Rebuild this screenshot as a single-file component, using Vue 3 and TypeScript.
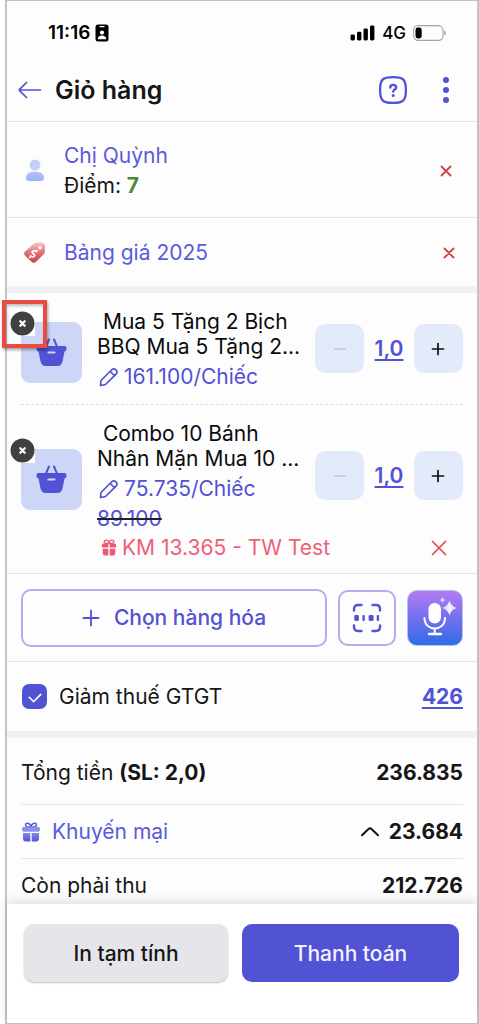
<script setup lang="ts">
import { ref } from 'vue'

interface CartItem {
  id: number
  lines: string[]
  price: string
  oldPrice?: string
  promo?: string
  qty: number
  highlighted?: boolean
}

const items = ref<CartItem[]>([
  {
    id: 1,
    lines: ['\u00a0Mua 5 Tặng 2 Bịch', 'BBQ Mua 5 Tặng 2...'],
    price: '161.100/Chiếc',
    qty: 1,
    highlighted: true,
  },
  {
    id: 2,
    lines: ['\u00a0Combo 10 Bánh', 'Nhân Mặn Mua 10 ...'],
    price: '75.735/Chiếc',
    oldPrice: '89.100',
    promo: 'KM 13.365 - TW Test',
    qty: 1,
  },
])

const reduceTax = ref(true)

function formatQty(n: number): string {
  return n.toFixed(1).replace('.', ',')
}

function removeItem(id: number): void {
  items.value = items.value.filter((i) => i.id !== id)
}
</script>

<template>
  <div class="page">
    <div class="screen">
      <div class="status">
        <span class="clock">11:16</span>
        <svg class="badge-icon" width="14" height="18" viewBox="0 0 14 18" aria-hidden="true">
          <rect x="0.5" y="0.5" width="13" height="17" rx="2.5" fill="#000" />
          <rect x="4.5" y="2" width="5" height="1.3" rx="0.6" fill="#fff" />
          <circle cx="7" cy="8.6" r="2.1" fill="#fff" />
          <path d="M2.8 15.2c0-2.6 1.8-3.8 4.2-3.8s4.2 1.2 4.2 3.8z" fill="#fff" />
        </svg>
        <span class="spacer"></span>
        <svg width="25" height="16" viewBox="0 0 25 16" aria-hidden="true">
          <rect x="0.5" y="9.5" width="4.4" height="6" rx="1.4" />
          <rect x="7" y="6.8" width="4.4" height="8.7" rx="1.4" />
          <rect x="13.5" y="3.6" width="4.4" height="11.9" rx="1.4" />
          <rect x="20" y="0.4" width="4.4" height="15.1" rx="1.4" />
        </svg>
        <span class="net">4G</span>
        <svg width="34" height="16" viewBox="0 0 34 16" aria-hidden="true">
          <rect x="0.6" y="0.6" width="29.4" height="14.8" rx="4.6" fill="none" stroke="#a3a3a3" stroke-width="1.1" />
          <rect x="2.5" y="2.6" width="6.2" height="10.8" rx="2.4" />
          <path d="M31.4 5.6c1.7.5 1.7 4.3 0 4.8z" fill="#8e8e8e" />
        </svg>
      </div>

      <header class="header">
        <button class="icon-btn" aria-label="Quay lại">
          <svg width="24" height="18" viewBox="0 0 24 18" fill="none" stroke="#5152d4" stroke-width="1.7" stroke-linecap="round" stroke-linejoin="round">
            <path d="M22.5 9H1.5M8.5 1.5L1.8 8.2Q1 9 1.8 9.8L8.5 16.5" />
          </svg>
        </button>
        <h1>Giỏ hàng</h1>
        <button class="icon-btn" aria-label="Trợ giúp">
          <svg width="30" height="30" viewBox="0 0 30 30" fill="none" stroke="#5152d4" stroke-linecap="round">
            <path d="M15 2.1C25.5 2.1 27.9 4.5 27.9 15S25.5 27.9 15 27.9 2.1 25.5 2.1 15 4.500 2.1 15 2.1Z" stroke-width="2.3" />
            <path d="M12.200 12.600c0-3.600 6-3.600 6-.1 0 2.200-3 2-3 4.100" stroke-width="2.400" />
            <circle cx="15.200" cy="20.600" r="1.500" fill="#5152d4" stroke="none" />
          </svg>
        </button>
        <button class="icon-btn more" aria-label="Thêm">
          <svg width="8" height="28" viewBox="0 0 8 28" fill="#5152d4">
            <circle cx="4" cy="4" r="3" /><circle cx="4" cy="14" r="3" /><circle cx="4" cy="24" r="3" />
          </svg>
        </button>
      </header>

      <main class="content">
        <section class="row customer">
          <svg class="lead" width="28" height="28" viewBox="0 0 28 28" aria-hidden="true">
            <defs>
              <linearGradient id="person" x1="0" y1="0" x2="0" y2="1">
                <stop offset="0" stop-color="#b3c1f6" /><stop offset="1" stop-color="#9db3f5" />
              </linearGradient>
            </defs>
            <circle cx="14" cy="8" r="5.500" fill="#c5cff7" />
            <path d="M5 20.500C5 16.500 9 14.800 14 14.800S23 16.500 23 20.500C23 23 22 24 20 24H8C6 24 5 23 5 20.500Z" fill="url(#person)" />
          </svg>
          <div class="grow">
            <a class="link" href="#">Chị Quỳnh</a>
            <div>Điểm: <b class="points">7</b></div>
          </div>
          <button class="icon-btn x-customer" aria-label="Bỏ khách hàng">
            <svg width="12" height="12" viewBox="0 0 12 12" stroke="#d43f3f" stroke-width="1.800" stroke-linecap="round"><path d="M1.500 1.500l9 9M10.500 1.500l-9 9" /></svg>
          </button>
        </section>

        <section class="row pricebook">
          <svg class="lead" width="28" height="28" viewBox="0 0 28 28" aria-hidden="true">
            <defs>
              <linearGradient id="tag" x1="0" y1="0" x2="0" y2="1">
                <stop offset="0" stop-color="#f9c6c9" /><stop offset="0.5" stop-color="#df7476" /><stop offset="1" stop-color="#cd3c3c" />
              </linearGradient>
            </defs>
            <path d="M12.500 5Q14 3.700 16 3.600L20.500 3.500Q24 3.500 24 7V12Q24 14 22.700 15.200L15 22.700Q12.800 24.600 10.600 22.700L4.300 17Q2 14.500 4.200 12.300Z" fill="url(#tag)" />
            <circle cx="19" cy="8.700" r="1.700" fill="#fff" />
            <path d="M15.500 12.600C13 11 10.200 12.200 11.400 14.100C12.400 15.400 14.200 15.200 13.500 17C12.700 18.400 10.600 18 9.400 17M16 11.600l-.8 1M9.700 17.200l-.9 1.200" fill="none" stroke="#fff" stroke-width="1.700" stroke-linecap="round" />
          </svg>
          <a class="link grow" href="#">Bảng giá 2025</a>
          <button class="icon-btn x-price" aria-label="Bỏ bảng giá">
            <svg width="12" height="12" viewBox="0 0 12 12" stroke="#d43f3f" stroke-width="1.800" stroke-linecap="round"><path d="M1.500 1.500l9 9M10.500 1.500l-9 9" /></svg>
          </button>
        </section>

        <div class="band"></div>

        <ul class="items">
          <li v-for="item in items" :key="item.id" class="item">
            <div class="thumb">
              <svg width="31" height="29" viewBox="0 0 31 29" aria-hidden="true">
                <path d="M10 8.500L13 1.500M21 8.500L18 1.500" stroke="#5152d4" stroke-width="2" stroke-linecap="round" />
                <path d="M2.500 8H28.500Q30.500 8 30.500 10V11Q30.500 13 28.500 13.500L26.600 23Q25.500 28 21.500 28H9.500Q5.500 28 4.400 23L2.500 13.500Q.5 13 .5 11V10Q.5 8 2.500 8Z" fill="#5152d4" />
                <path d="M12.500 14.500H18.500" stroke="#cfd6f7" stroke-width="2.200" stroke-linecap="round" />
              </svg>
              <button class="remove" aria-label="Xóa hàng hóa" @click="removeItem(item.id)">
                <svg width="25" height="25" viewBox="0 0 25 25">
                  <circle cx="12.500" cy="12.500" r="12" fill="#404040" />
                  <path d="M10.300 10.300l4.400 4.400M14.700 10.300l-4.400 4.400" stroke="#fff" stroke-width="2.300" stroke-linecap="round" />
                </svg>
              </button>
              <span v-if="item.highlighted" class="marker"></span>
            </div>

            <div class="info">
              <div v-for="line in item.lines" :key="line" class="name">{{ line }}</div>
              <button class="price">
                <svg width="20" height="20" viewBox="0 0 20 20" fill="none" stroke="#5152d4" stroke-width="1.700" stroke-linejoin="round" aria-hidden="true">
                  <path d="M1.500 18.500L2 13.500L13 2.500Q15 .9 16.900 2.800Q18.800 4.700 17.300 6.800L6.500 17.500L1.500 18.500ZM11.300 4.500l4 4" />
                </svg>
                {{ item.price }}
              </button>
              <div v-if="item.oldPrice"><s class="old"><span>{{ item.oldPrice }}</span></s></div>
            </div>

            <div class="stepper">
              <button class="step" disabled aria-label="Giảm">
                <svg width="14" height="14" viewBox="0 0 14 14" stroke="#c3c7d2" stroke-width="1.500"><path d="M1 7h12" /></svg>
              </button>
              <button class="qty">{{ formatQty(item.qty) }}</button>
              <button class="step" aria-label="Tăng">
                <svg width="14" height="14" viewBox="0 0 14 14" stroke="#111" stroke-width="1.700" stroke-linecap="round"><path d="M1.500 7h11M7 1.500v11" /></svg>
              </button>
            </div>

            <div v-if="item.promo" class="promo">
              <svg width="16" height="17" viewBox="0 0 16 17" fill="#ef5a72" aria-hidden="true">
                <path d="M7.500 4.500C5 4.500 3 4 3.200 2.300 3.500.6 7 .5 8 3.500 9 .5 12.500.6 12.800 2.300 13 4 11 4.500 8.500 4.500Z" fill="none" stroke="#ef5a72" stroke-width="1.400" />
                <path d="M2 4.500H7.300V8.500H1.500Q.8 8.500.8 7.500V6Q.8 4.500 2 4.500ZM8.700 4.500H14Q15.200 4.500 15.200 6V7.500Q15.200 8.500 14.500 8.500H8.700ZM1.700 9.800H7.300V16.500H4Q1.700 16.500 1.700 14ZM8.700 9.800H14.300V14Q14.300 16.500 12 16.500H8.700Z" />
              </svg>
              <span class="grow">{{ item.promo }}</span>
              <button class="icon-btn" aria-label="Bỏ khuyến mại">
                <svg width="16" height="16" viewBox="0 0 16 16" stroke="#e5484d" stroke-width="1.700" stroke-linecap="round"><path d="M1.500 1.500l13 13M14.500 1.500l-13 13" /></svg>
              </button>
            </div>
          </li>
        </ul>

        <section class="actions">
          <button class="choose">
            <svg width="18" height="18" viewBox="0 0 18 18" stroke="#5152d4" stroke-width="1.800" stroke-linecap="round" aria-hidden="true"><path d="M1.500 9h15M9 1.500v15" /></svg>
            Chọn hàng hóa
          </button>
          <button class="scan" aria-label="Quét mã">
            <svg width="30" height="30" viewBox="0 0 30 30" fill="none" stroke="#5152d4" stroke-width="2.400" stroke-linecap="round">
              <path d="M2 7.500V6Q2 2 6 2H9.500M20.500 2H24Q28 2 28 6V7.500M28 22.500V24Q28 28 24 28H20.500M9.500 28H6Q2 28 2 24V22.500" />
              <g fill="#5152d4" stroke="none">
                <rect x="2.300" y="12" width="4.600" height="6" rx="1.400" />
                <rect x="10.400" y="12" width="2.400" height="6" rx="1" />
                <rect x="16.600" y="12" width="5" height="6" rx="1.400" />
                <rect x="24.700" y="12" width="2.400" height="6" rx="1" />
              </g>
            </svg>
          </button>
          <button class="voice" aria-label="Giọng nói">
            <svg width="54" height="54" viewBox="0 0 54 54" fill="none" aria-hidden="true">
              <defs>
                <linearGradient id="spark" x1="0" y1="0" x2="1" y2="0">
                  <stop offset="0" stop-color="#a9eafa" /><stop offset="0.5" stop-color="#f2f0ff" /><stop offset="1" stop-color="#f6c9ee" />
                </linearGradient>
              </defs>
              <rect x="20.500" y="12" width="12.500" height="20.500" rx="6.200" fill="#fff" />
              <path d="M16.500 27C16.500 41 37 41 37 27M26.700 37.500V43" stroke="#fff" stroke-width="2" stroke-linecap="round" />
              <path d="M21 43H33" stroke="#fff" stroke-width="2.400" stroke-linecap="round" />
              <path d="M41.500 9.500Q43 15.500 49 17Q43 18.500 41.500 24.500Q40 18.500 34 17Q40 15.500 41.500 9.500Z" fill="url(#spark)" />
              <path d="M34.500 6Q35 8.500 37.500 9Q35 9.500 34.500 12Q34 9.500 31.500 9Q34 8.500 34.500 6Z" fill="#e2d5fc" />
            </svg>
          </button>
        </section>

        <section class="tax">
          <label class="tax-label">
            <input v-model="reduceTax" type="checkbox" />
            Giảm thuế GTGT
          </label>
          <button class="tax-value">426</button>
        </section>

        <div class="band"></div>

        <dl class="totals">
          <div class="line first">
            <dt>Tổng tiền <b>(SL: 2,0)</b></dt>
            <dd>236.835</dd>
          </div>
          <div class="line">
            <dt class="discount">
              <svg width="20" height="20" viewBox="0 0 20 20" aria-hidden="true">
                <defs>
                  <linearGradient id="gift" x1="0" y1="0" x2="0" y2="1">
                    <stop offset="0" stop-color="#8587e8" /><stop offset="1" stop-color="#5254d4" />
                  </linearGradient>
                </defs>
                <path d="M9.500 5C6 5 4.200 4 4.600 2.300 5 .5 9 .8 10 4.500 11 .8 15 .5 15.400 2.300 15.800 4 14 5 10.500 5Z" fill="none" stroke="#5658d6" stroke-width="1.500" />
                <rect x="1" y="4.800" width="18" height="5" rx="2" fill="#8d8fea" />
                <path d="M2 11H9.300V19.500H5Q2 19.500 2 16.500ZM10.700 11H18V16.500Q18 19.500 15 19.500H10.700Z" fill="url(#gift)" />
              </svg>
              Khuyến mại
            </dt>
            <dd>
              <svg width="20" height="11" viewBox="0 0 20 11" fill="none" stroke="#111" stroke-width="2" stroke-linecap="round" stroke-linejoin="round" aria-hidden="true"><path d="M2 9.200L8.800 2.800Q10 1.700 11.200 2.800L18 9.200" /></svg>
              23.684
            </dd>
          </div>
          <div class="line">
            <dt>Còn phải thu</dt>
            <dd>212.726</dd>
          </div>
        </dl>
      </main>

      <footer class="footer">
        <button class="btn secondary">In tạm tính</button>
        <button class="btn primary">Thanh toán</button>
      </footer>
    </div>
  </div>
</template>

<style>
html,
body {
  background: #fff;
}
</style>

<style scoped>
* {
  box-sizing: border-box;
}
.page {
  padding-left: 5px;
  height: 100vh;
  font-family: Inter, 'Liberation Sans', sans-serif;
  font-size: 21px;
  line-height: 30px;
  color: #161616;
}
.screen {
  display: flex;
  flex-direction: column;
  height: 100%;
  background: #fdfdfe;
  border: 1px solid #c4c4c6;
  border-width: 1px 2px 1px 2px;
}
button {
  font: inherit;
  color: inherit;
  background: none;
  border: 0;
  padding: 0;
  cursor: pointer;
  display: flex;
  align-items: center;
  justify-content: center;
  white-space: nowrap;
}
svg {
  display: block;
  flex: none;
}
.grow {
  flex: 1;
}
.spacer {
  flex: 1;
}
.status {
  display: flex;
  align-items: center;
  height: 64px;
  padding: 0 30px 0 41px;
  color: #000;
}
.clock {
  font-weight: 600;
  font-size: 19px;
  margin-right: 5px;
}
.net {
  font-size: 17px;
  font-weight: 500;
  margin: 0 7px;
}
.header {
  display: flex;
  align-items: center;
  height: 57px;
  padding: 0 27px 6px 11px;
  border-bottom: 1px solid #e4e4e7;
}
h1 {
  flex: 1;
  margin: 0 0 0 13px;
  font-size: 25px;
  font-weight: 600;
}
.more {
  margin-left: 34px;
}
.content {
  flex: 1;
  min-height: 0;
  overflow-y: auto;
  scrollbar-width: none;
  margin-left: -7px;
  padding-left: 7px;
}
.row {
  display: flex;
  align-items: center;
  padding: 2px 14px 0 14px;
  border-bottom: 1px solid #e4e4e7;
}
.customer {
  height: 96px;
}
.pricebook {
  height: 68px;
  border-bottom: 0;
}
.lead {
  margin-right: 15px;
}
.link,
.points {
  text-decoration: none;
}
.link {
  color: #5a5bdc;
}
.points {
  color: #4d8b37;
}
.x-customer {
  padding-right: 11px;
}
.x-price {
  padding-right: 8px;
}
.band {
  height: 7px;
  background: #f0f0f6;
}
.items {
  list-style: none;
  margin: 0;
  padding: 0 14px;
}
.item {
  display: grid;
  grid-template-columns: 61px minmax(0, 1fr) auto;
  column-gap: 15px;
  align-items: center;
  padding: 16px 0 12px;
}
.item + .item {
  border-top: 1px dashed #dedee2;
}
.thumb {
  position: relative;
  display: flex;
  align-items: center;
  justify-content: center;
  height: 61px;
  margin-top: 4px;
  background: #cdd6f7;
  border-radius: 9px;
}
.remove {
  position: absolute;
  left: -11px;
  top: -11px;
  width: 25px;
  height: 25px;
  background: #fff;
}
.marker {
  position: absolute;
  left: -19px;
  top: -22px;
  width: 45px;
  height: 48px;
  border: 4px solid #e84c43;
  box-shadow: 1px 2px 3px rgba(0, 0, 0, 0.35), inset 1px 2px 3px rgba(0, 0, 0, 0.25);
  pointer-events: none;
}
.name {
  line-height: 25px;
  white-space: nowrap;
  color: #0c0c0c;
}
.price {
  gap: 5px;
  margin: 3px 0 0 2px;
  color: #5152d4;
}
.old {
  color: #222;
}
.old span {
  color: #5152d4;
}
.stepper {
  display: flex;
  align-items: center;
  justify-content: space-between;
  width: 148px;
  margin-bottom: 4px;
}
.step {
  width: 49px;
  height: 49px;
  border-radius: 10px;
  background: #e3eafa;
}
.qty,
.tax-value {
  color: #5152d4;
  font-weight: 600;
  text-decoration: underline;
  text-decoration-thickness: 2px;
  text-underline-offset: 3px;
  text-decoration-skip-ink: none;
}
.tax-value {
  font-weight: 700;
}
.promo {
  grid-column: 2 / -1;
  display: flex;
  align-items: center;
  line-height: 27px;
  padding: 0 16px 0 4px;
  gap: 5px;
  color: #ef6076;
}
.actions {
  display: flex;
  align-items: center;
  height: 89px;
  padding: 0 14px;
  gap: 11px;
  border: 1px solid #e4e4e7;
  border-width: 1px 0;
}
.choose,
.scan {
  border: 2px solid #afafeb;
  border-radius: 10px;
}
.choose {
  flex: 1;
  height: 58px;
  gap: 14px;
  color: #5152d4;
  font-weight: 500;
}
.scan {
  width: 58px;
  height: 56px;
}
.voice {
  width: 56px;
  height: 56px;
  border-radius: 10px;
  border: 1px solid #b6c0f5;
  background: linear-gradient(#b27cf2, #7470ee 50%, #2f6ce8);
}
.tax {
  display: flex;
  align-items: center;
  justify-content: space-between;
  height: 69px;
  padding: 0 14px 0 15px;
}
.tax-label {
  display: flex;
  align-items: center;
  gap: 12px;
}
input {
  appearance: none;
  display: grid;
  place-items: center;
  width: 25px;
  height: 25px;
  margin: 0;
  border-radius: 7px;
  border: 2px solid #5152d4;
}
input:checked {
  background: #5152d4;
}
input:checked::after {
  content: '';
  width: 6px;
  height: 10px;
  border: solid #fff;
  border-width: 0 2px 2px 0;
  border-radius: 1px;
  transform: translateY(-1px) rotate(45deg);
}
.totals {
  margin: 0;
  padding: 0 14px;
}
.line {
  display: flex;
  align-items: center;
  justify-content: space-between;
  height: 54px;
}
.line.first {
  height: 66px;
  padding-top: 4px;
}
.line + .line {
  border-top: 1px solid #e6e6ee;
}
.discount {
  display: flex;
  align-items: center;
  gap: 11px;
  color: #5a5bdc;
}
dd {
  display: flex;
  align-items: center;
  gap: 9px;
  margin: 0;
  font-weight: 700;
}
.footer {
  position: relative;
  display: flex;
  gap: 14px;
  padding: 20px 18px 41px 17px;
  background: #fff;
  box-shadow: 0 -3px 10px rgba(0, 0, 0, 0.12);
}
.btn {
  height: 58px;
  padding-top: 2px;
  border-radius: 10px;
  font-weight: 500;
}
.secondary {
  flex: 204;
  background: #e5e5ea;
  box-shadow: 0 1px 2px rgba(0, 0, 0, 0.25);
}
.primary {
  flex: 217;
  background: #5152d4;
  color: #f3f3ff;
}
</style>
